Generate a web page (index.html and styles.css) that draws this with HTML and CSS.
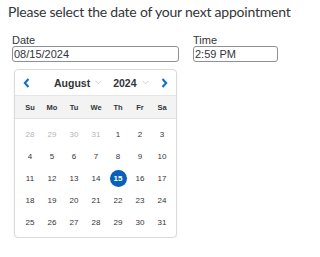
FILE: index.html
```html
<!DOCTYPE html>
<html>
<head>
<meta charset="utf-8">
<link rel="stylesheet" href="styles.css">
</head>
<body>
<div class="page">
  <h1 class="title">Please select the date of your next appointment</h1>
  <div class="fields">
    <div class="field field-date">
      <div class="label">Date</div>
      <div class="input">08/15/2024</div>
      <div class="calendar">
        <div class="cal-head">
          <span class="nav prev"><svg width="7" height="10" viewBox="0 0 7 10"><path d="M5.5 1 L1.8 5 L5.5 9" fill="none" stroke="#0a6ed1" stroke-width="2"/></svg></span>
          <span class="sel month">August<svg class="dd" width="7" height="5" viewBox="0 0 7 5"><path d="M0.5 0.8 L3.5 3.8 L6.5 0.8" fill="none" stroke="#cfcfcf" stroke-width="1"/></svg></span>
          <span class="sel year">2024<svg class="dd" width="7" height="5" viewBox="0 0 7 5"><path d="M0.5 0.8 L3.5 3.8 L6.5 0.8" fill="none" stroke="#cfcfcf" stroke-width="1"/></svg></span>
          <span class="nav next"><svg width="7" height="10" viewBox="0 0 7 10"><path d="M1.5 1 L5.2 5 L1.5 9" fill="none" stroke="#0a6ed1" stroke-width="2"/></svg></span>
        </div>
        <div class="weekdays">
          <span>Su</span><span>Mo</span><span>Tu</span><span>We</span><span>Th</span><span>Fr</span><span>Sa</span>
        </div>
        <div class="days">
          <span class="other">28</span><span class="other">29</span><span class="other">30</span><span class="other">31</span><span>1</span><span>2</span><span>3</span>
          <span>4</span><span>5</span><span>6</span><span>7</span><span>8</span><span>9</span><span>10</span>
          <span>11</span><span>12</span><span>13</span><span>14</span><span class="selected"><b>15</b></span><span>16</span><span>17</span>
          <span>18</span><span>19</span><span>20</span><span>21</span><span>22</span><span>23</span><span>24</span>
          <span>25</span><span>26</span><span>27</span><span>28</span><span>29</span><span>30</span><span>31</span>
        </div>
      </div>
    </div>
    <div class="field field-time">
      <div class="label">Time</div>
      <div class="input">2:59 PM</div>
    </div>
  </div>
</div>
</body>
</html>
```

FILE: styles.css
```css
html, body {
  margin: 0;
  padding: 0;
  background: #ffffff;
}
.page {
  padding: 2px 0 0 8px;
}
.title {
  margin: 0;
  font-family: Lato, "Noto Sans", sans-serif;
  font-weight: normal;
  font-size: 14px;
  letter-spacing: -0.22px;
  line-height: 20px;
  white-space: nowrap;
  color: #32363a;
}
.fields {
  display: flex;
  gap: 14px;
  margin: 12px 0 0 4px;
}
.field-date {
  width: 167px;
}
.field-time {
  width: 85px;
}
.label {
  font-family: "Liberation Sans", Arial, sans-serif;
  font-size: 11px;
  line-height: 12px;
  color: #32363a;
  height: 12px;
}
.input {
  box-sizing: border-box;
  height: 16px;
  border: 1px solid #8d9196;
  border-radius: 3px;
  padding: 0 1px;
  font-family: "Liberation Sans", Arial, sans-serif;
  font-size: 11px;
  line-height: 14px;
  color: #32363a;
}
.calendar {
  box-sizing: border-box;
  width: 163px;
  margin: 7px 0 0 2px;
  border: 1px solid #dadada;
  border-radius: 4px;
  box-shadow: 0 1px 2px rgba(0, 0, 0, 0.08);
  font-family: "Liberation Sans", Arial, sans-serif;
  color: #32363a;
  overflow: hidden;
}
.cal-head {
  display: flex;
  align-items: center;
  height: 25px;
  border-bottom: 1px solid #e6e6e6;
}
.nav {
  display: flex;
  width: 7px;
  height: 10px;
}
.prev {
  margin-left: 8px;
}
.next {
  margin-left: auto;
  margin-right: 8px;
}
.sel {
  display: flex;
  align-items: center;
  font-weight: bold;
  font-size: 10.5px;
  color: #32363a;
}
.month {
  margin-left: 24px;
}
.year {
  margin-left: 11px;
}
.dd {
  margin-left: 5px;
}
.weekdays {
  display: grid;
  grid-template-columns: repeat(7, 22px);
  padding: 0 4px;
  height: 22px;
  align-items: center;
  background: #f3f3f3;
  border-bottom: 1px solid #e3e3e3;
  font-weight: bold;
  font-size: 7.5px;
  text-align: center;
}
.days {
  display: grid;
  grid-template-columns: repeat(7, 22px);
  grid-auto-rows: 22px;
  padding: 4px 4px 4px;
  font-size: 8px;
  text-align: center;
  align-items: center;
}
.days span {
  display: flex;
  align-items: center;
  justify-content: center;
  height: 22px;
}
.days .other {
  color: #b5b5b5;
}
.days .selected b {
  display: flex;
  align-items: center;
  justify-content: center;
  width: 17px;
  height: 17px;
  border-radius: 50%;
  background: #0a5fb9;
  color: #ffffff;
  font-weight: bold;
}
```
